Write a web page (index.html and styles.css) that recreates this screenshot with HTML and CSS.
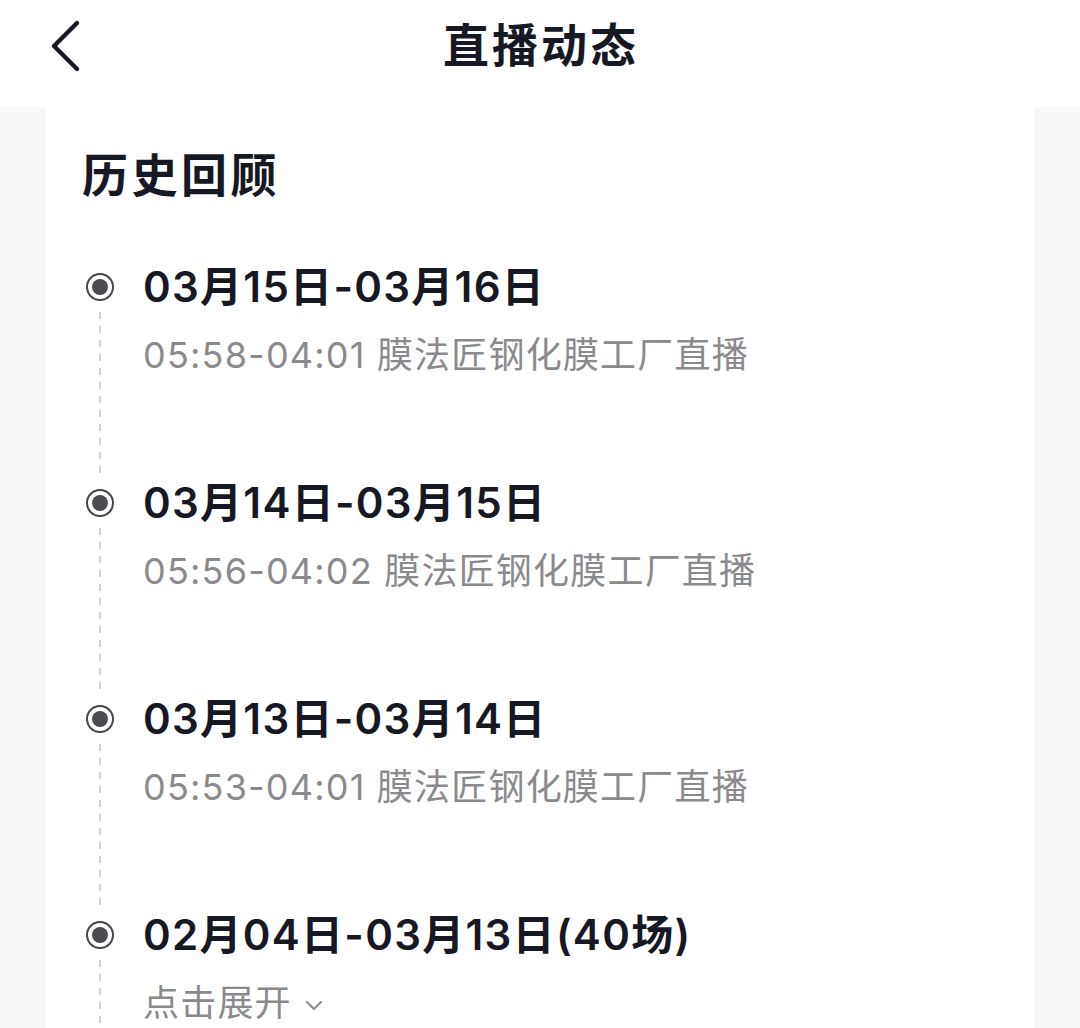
FILE: index.html
```html
<!DOCTYPE html>
<html lang="zh-CN">
<head>
<meta charset="utf-8">
<title>直播动态</title>
<link rel="stylesheet" href="styles.css">
</head>
<body>
<header class="nav">
  <button class="back" aria-label="返回">
    <svg width="40" height="56" viewBox="0 0 40 56"><path d="M30 5 L7 28 L30 51" fill="none" stroke="#161823" stroke-width="4.4" stroke-linecap="round" stroke-linejoin="round"/></svg>
  </button>
  <h1 class="nav-title">直播动态</h1>
</header>
<main class="page">
  <section class="card">
    <h2 class="card-title">历史回顾</h2>
    <ul class="timeline">
      <li class="item">
        <div class="rail"><span class="dot"></span><span class="line"></span></div>
        <div class="content">
          <div class="date">03月15日-03月16日</div>
          <div class="desc">05:58-04:01 膜法匠钢化膜工厂直播</div>
        </div>
      </li>
      <li class="item">
        <div class="rail"><span class="dot"></span><span class="line"></span></div>
        <div class="content">
          <div class="date">03月14日-03月15日</div>
          <div class="desc">05:56-04:02 膜法匠钢化膜工厂直播</div>
        </div>
      </li>
      <li class="item">
        <div class="rail"><span class="dot"></span><span class="line"></span></div>
        <div class="content">
          <div class="date">03月13日-03月14日</div>
          <div class="desc">05:53-04:01 膜法匠钢化膜工厂直播</div>
        </div>
      </li>
      <li class="item">
        <div class="rail"><span class="dot"></span><span class="line"></span></div>
        <div class="content">
          <div class="date">02月04日-03月13日(40场)</div>
          <div class="desc expand">点击展开
            <svg class="caret" width="20" height="14" viewBox="0 0 20 14"><path d="M3 4 L10 11 L17 4" fill="none" stroke="#8a8a8d" stroke-width="2" stroke-linecap="round" stroke-linejoin="round"/></svg>
          </div>
        </div>
      </li>
    </ul>
  </section>
</main>
</body>
</html>
```
FILE: styles.css
```css
* { box-sizing: border-box; }
html, body {
  margin: 0;
  padding: 0;
}
body {
  font-family: Inter, "Noto Sans CJK SC", sans-serif;
  color: #161823;
  background: #f7f7f8;
  height: 1028px;
  overflow: hidden;
}
.nav {
  height: 107px;
  background: #fff;
  display: flex;
  align-items: center;
  justify-content: center;
  position: relative;
}
.back {
  position: absolute;
  left: 47px;
  top: 18px;
  border: 0;
  background: none;
  padding: 0;
  width: 40px;
  height: 56px;
  display: flex;
}
.nav-title {
  margin: 0 0 18px;
  padding-left: 2px;
  font-size: 46px;
  font-weight: 700;
  letter-spacing: 3px;
  line-height: 60px;
}
.page {
  padding: 0 46px;
}
.card {
  background: #fff;
  padding: 38px 36px 0;
  min-height: 921px;
}
.card-title {
  margin: 0;
  font-size: 46px;
  font-weight: 700;
  line-height: 60px;
  letter-spacing: 3.5px;
}
.timeline {
  list-style: none;
  margin: 54px 0 0;
  padding: 0;
}
.item {
  display: flex;
  gap: 25px;
  padding-bottom: 92px;
}
.item:last-child {
  padding-bottom: 40px;
}
.rail {
  width: 36px;
  display: flex;
  flex-direction: column;
  align-items: center;
  margin-bottom: -92px;
}
.item:last-child .rail { margin-bottom: -40px; }
.dot {
  width: 28px;
  height: 28px;
  margin-top: 14px;
  border-radius: 50%;
  border: 2px solid #45464b;
  display: flex;
  align-items: center;
  justify-content: center;
  flex: none;
}
.dot::after {
  content: "";
  width: 16px;
  height: 16px;
  border-radius: 50%;
  background: #4c4d53;
}
.line {
  flex: 1;
  width: 2px;
  margin-top: 11px;
  background: repeating-linear-gradient(to bottom, #d2d2d4 0 7px, transparent 7px 14px);
}
.content {
  display: flex;
  flex-direction: column;
  gap: 12px;
}
.date {
  font-size: 42px;
  font-weight: 600;
  line-height: 56px;
  letter-spacing: 1.3px;
  white-space: nowrap;
}
.desc {
  font-size: 36px;
  line-height: 56px;
  color: #8a8a8d;
  letter-spacing: 1.2px;
  white-space: nowrap;
}
.expand {
  display: flex;
  align-items: center;
  gap: 12px;
}
.caret {
  margin-top: 4px;
}
```
